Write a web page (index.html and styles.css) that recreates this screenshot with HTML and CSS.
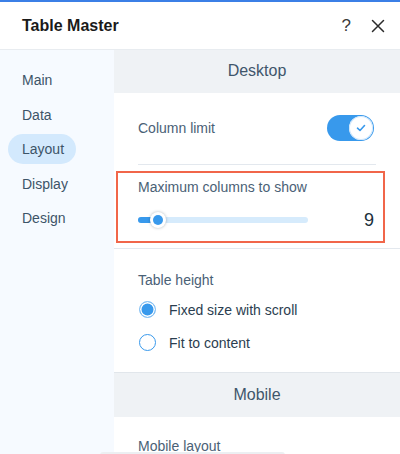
FILE: index.html
```html
<!DOCTYPE html>
<html>
<head>
<meta charset="utf-8">
<link rel="stylesheet" href="styles.css">
</head>
<body>
<div class="panel">
  <div class="topline"></div>
  <header class="header">
    <div class="title">Table Master</div>
    <div class="header-actions">
      <span class="help">?</span>
      <svg class="close" width="14" height="14" viewBox="0 0 14 14"><path d="M1.5 1.5 L12.5 12.5 M12.5 1.5 L1.5 12.5" stroke="#2b2b2b" stroke-width="1.5" fill="none" stroke-linecap="round"/></svg>
    </div>
  </header>
  <div class="body">
    <nav class="sidebar">
      <div class="nav-item">Main</div>
      <div class="nav-item">Data</div>
      <div class="nav-item active">Layout</div>
      <div class="nav-item">Display</div>
      <div class="nav-item">Design</div>
    </nav>
    <main class="content">
      <div class="section-head">Desktop</div>
      <div class="row toggle-row">
        <span class="label">Column limit</span>
        <div class="toggle">
          <div class="knob">
            <svg width="10" height="8" viewBox="0 0 10 8"><path d="M1.5 4.2 L4 6.5 L8.5 1.5" stroke="#3899ec" stroke-width="1.6" fill="none" stroke-linecap="round" stroke-linejoin="round"/></svg>
          </div>
        </div>
      </div>
      <div class="divider inset"></div>
      <div class="slider-block">
        <div class="label">Maximum columns to show</div>
        <div class="slider-row">
          <div class="track">
            <div class="fill" style="width: 20px"></div>
            <div class="thumb" style="left: 20px"></div>
          </div>
          <span class="value">9</span>
        </div>
      </div>
      <div class="divider"></div>
      <div class="radio-block">
        <div class="label">Table height</div>
        <div class="radio-row"><span class="radio checked"></span><span class="radio-label">Fixed size with scroll</span></div>
        <div class="radio-row"><span class="radio"></span><span class="radio-label">Fit to content</span></div>
      </div>
      <div class="section-head bordered">Mobile</div>
      <div class="mobile-block">
        <div class="label">Mobile layout</div>
      </div>
    </main>
  </div>
  <div class="scrollbar"></div>
</div>
</body>
</html>
```
FILE: styles.css
```css
* { box-sizing: border-box; }
html, body { margin: 0; padding: 0; }
body {
  width: 400px;
  height: 454px;
  overflow: hidden;
  font-family: "Liberation Sans", Arial, sans-serif;
  background: #fff;
}
.panel { position: relative; width: 400px; height: 454px; display: flex; flex-direction: column; }
.topline { height: 2px; background: #3b7fe6; }
.header {
  height: 48px;
  display: flex;
  align-items: center;
  justify-content: space-between;
  padding: 0 15px 0 22px;
  border-bottom: 1px solid #e8ecf0;
}
.title { font-size: 16px; font-weight: bold; color: #1a1a1a; }
.header-actions { display: flex; align-items: center; gap: 20px; }
.help { font-size: 17px; color: #3a3a3a; line-height: 1; }
.close { display: block; }
.body { flex: 1; display: flex; min-height: 0; }
.sidebar {
  width: 114px;
  background: #f6faff;
  padding: 15px 0 0 8px;
  display: flex;
  flex-direction: column;
  gap: 4.5px;
}
.nav-item {
  height: 30px;
  line-height: 30px;
  padding-left: 14px;
  font-size: 14px;
  color: #3d5468;
  width: 68px;
  border-radius: 15px;
}
.nav-item.active { background: #d3e9fd; }
.content { flex: 1; background: #fff; display: flex; flex-direction: column; }
.section-head {
  height: 43px;
  background: #eff2f5;
  display: flex;
  align-items: center;
  justify-content: center;
  font-size: 16px;
  color: #3f566b;
}
.section-head.bordered { border-top: 1px solid #e1e6eb; height: 45px; }
.label { font-size: 14px; color: #4a6176; }
.row { display: flex; align-items: center; justify-content: space-between; }
.toggle-row { height: 71px; padding: 0 26px 0 24px; }
.toggle {
  width: 47px;
  height: 26px;
  border-radius: 13px;
  background: #3899ec;
  position: relative;
}
.knob {
  position: absolute;
  right: 1px;
  top: 1px;
  width: 24px;
  height: 24px;
  border-radius: 50%;
  background: #fff;
  display: flex;
  align-items: center;
  justify-content: center;
  box-shadow: 0 0 0 1px #cfe6fb inset;
}
.divider { height: 1px; background: #e3e8ee; }
.divider.inset { margin: 0 24px; }
.slider-block {
  position: relative;
  height: 84px;
  padding: 14px 26px 0 24px;
}
.slider-block::after {
  content: "";
  position: absolute;
  left: 2px;
  right: 15px;
  top: 6px;
  height: 68px;
  border: 2px solid #f1664a;
}
.slider-row {
  display: flex;
  align-items: center;
  justify-content: space-between;
  margin-top: 15px;
}
.track {
  position: relative;
  width: 170px;
  height: 6px;
  border-radius: 3px;
  background: #d6ebfc;
}
.fill {
  position: absolute;
  left: 0; top: 0; bottom: 0;
  border-radius: 3px;
  background: #3899ec;
}
.thumb {
  position: absolute;
  top: 50%;
  width: 16px;
  height: 16px;
  margin: -8px 0 0 -8px;
  border-radius: 50%;
  background: #fff;
  box-shadow: 0 0 3px rgba(22, 45, 61, 0.35);
}
.thumb::after {
  content: "";
  position: absolute;
  left: 3px; top: 3px;
  width: 10px; height: 10px;
  border-radius: 50%;
  background: #3899ec;
}
.value { font-size: 18px; color: #20303c; margin-right: 0; }
.radio-block { height: 123px; padding: 23px 24px 0 24px; }
.radio-row { display: flex; align-items: center; height: 33px; margin-top: 0; }
.radio-block .label { margin-bottom: 5px; }
.radio {
  width: 17px;
  height: 17px;
  border-radius: 50%;
  border: 1.5px solid #3899ec;
  background: #fff;
  margin-left: 1px;
  margin-right: 13px;
  position: relative;
  flex-shrink: 0;
}
.radio.checked { background: #3899ec; border-color: #8cc4f4; box-shadow: inset 0 0 0 1.5px #fff; }
.radio-label { font-size: 14px; color: #2b3e50; }
.mobile-block { padding: 21px 24px 0 24px; }
.scrollbar {
  position: absolute;
  left: 100px;
  bottom: -4px;
  width: 185px;
  height: 6px;
  border-radius: 3px;
  background: #eceff2;
}
```
